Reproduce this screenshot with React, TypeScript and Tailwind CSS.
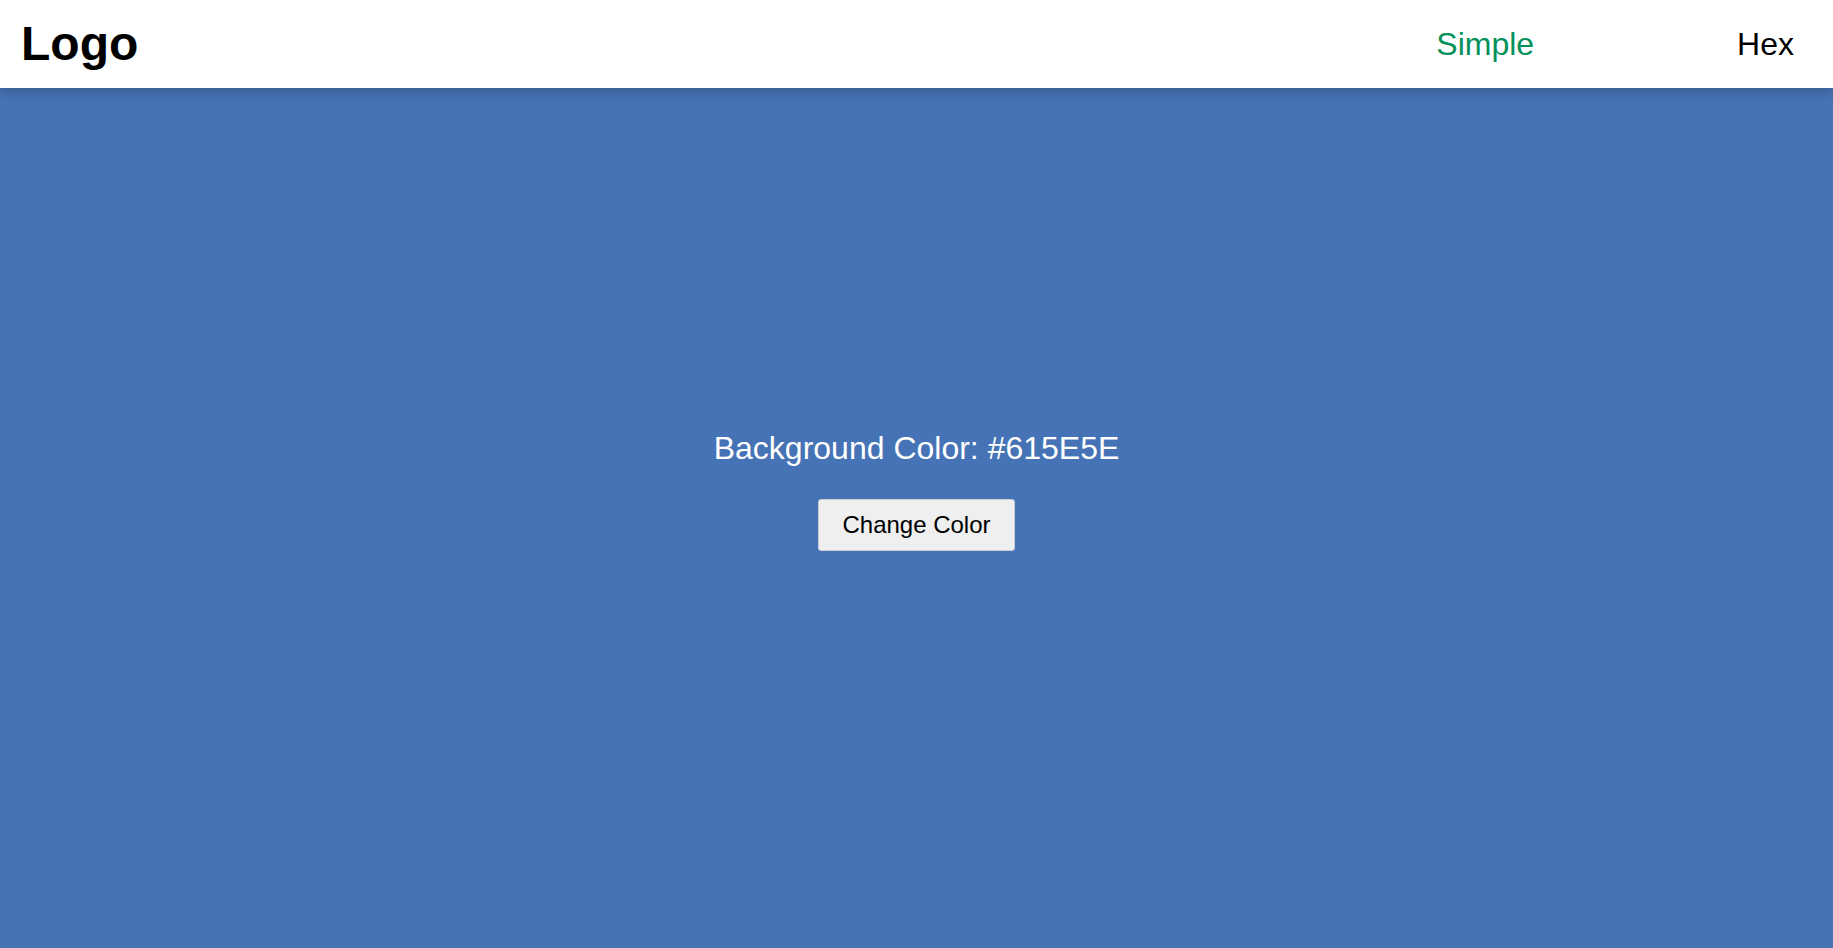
import React, { useState } from "react";

export default function App() {
  const [color] = useState("#615E5E");
  return (
    <div className="flex h-[948px] w-full flex-col bg-[#4673b5] font-['Liberation_Sans',Arial,sans-serif]">
      <header className="relative z-10 flex h-[88px] shrink-0 items-center justify-between bg-white pl-[21px] pr-[39px] shadow-[0_3px_12px_rgba(0,0,0,0.22)]">
        <div className="text-[48px] font-bold leading-normal text-black">Logo</div>
        <nav className="flex items-center gap-[203px]">
          <a className="text-[32px] leading-normal text-[#03915b]">Simple</a>
          <a className="text-[32px] leading-normal text-black">Hex</a>
        </nav>
      </header>
      <main className="flex flex-1 flex-col items-center justify-center pb-[62px]">
        <p className="text-[32px] leading-normal text-white">Background Color: {color}</p>
        <button className="mt-[27px] h-[52px] rounded-[3px] border border-[#c8cdd4] bg-[#efefef] px-[23px] text-[24px] text-black">
          Change Color
        </button>
      </main>
    </div>
  );
}
